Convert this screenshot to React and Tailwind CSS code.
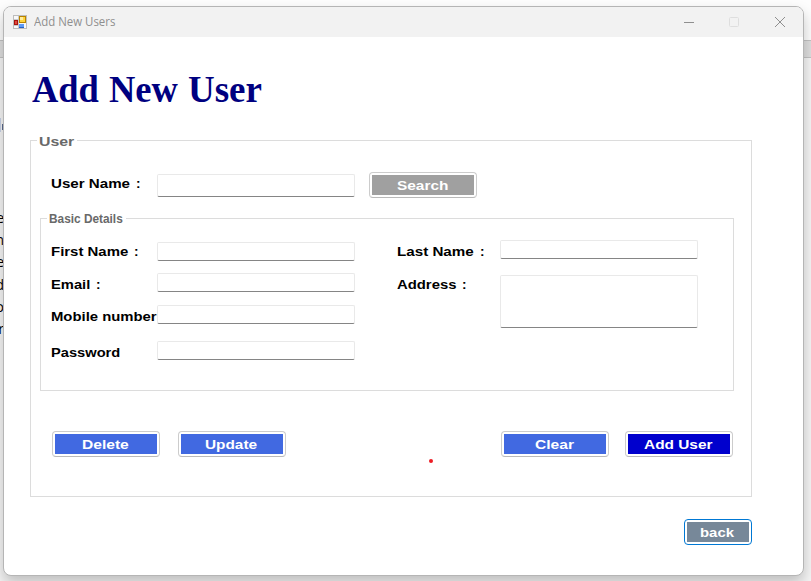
import { useLayoutEffect, useRef, useState } from "react";

// Single line of text stretched horizontally to a given width.
function Wide({ children, width, className = "" }) {
  const ref = useRef(null);
  const [scale, setScale] = useState(1);
  useLayoutEffect(() => {
    setScale(width / ref.current.offsetWidth);
  }, [width]);
  return (
    <span className={`block whitespace-nowrap text-left ${className}`} style={{ width }}>
      <span ref={ref} className="inline-block origin-left" style={{ transform: `scaleX(${scale})` }}>
        {children}
      </span>
    </span>
  );
}

function Label({ children, width, colon }) {
  return (
    <div className="flex h-4 items-center text-[13.6px] leading-4 text-black">
      <Wide width={width} className="font-bold">{children}</Wide>
      {colon && <span className="ml-[6px] font-bold">:</span>}
    </div>
  );
}

function Field({ className = "h-[19px]" }) {
  return (
    <div className={`w-[198px] shrink-0 rounded-[2px] border border-[#e9e9e9] border-b-[#858585] bg-white ${className}`} />
  );
}

function Button({ children, fill, textWidth, className = "w-[108px]", border = "border-[#cccccc] border-b-[#bababa]" }) {
  return (
    <button className={`flex h-[26px] shrink-0 rounded-[4px] border bg-white p-[2px] ${border} ${className}`}>
      <span className={`flex h-5 w-full justify-center pr-[2px] pt-px text-[13.6px] font-bold leading-5 text-white ${fill}`}>
        <Wide width={textWidth}>{children}</Wide>
      </span>
    </button>
  );
}

function AppIcon() {
  return (
    <svg width="14" height="14" viewBox="0 0 14 14" shapeRendering="crispEdges">
      <rect x=".5" y=".5" width="13" height="13" fill="#f8f8f8" stroke="#bdbdbd" />
      <path d="M5.5 1v12M1 4.5h4M1 10.5h4" stroke="#c9c9c9" />
      <rect x="1" y="5" width="4" height="5" fill="#e0483c" />
      <rect x="1.5" y="5.5" width="3" height="4" fill="none" stroke="#a8140e" />
      <rect x="6.5" y="1.5" width="6" height="6" fill="#ffd43e" stroke="#b88300" />
      <rect x="7" y="2" width="3" height="3" fill="#ffed9d" />
      <rect x="6" y="9" width="5" height="4" fill="#5e9bf5" />
      <path d="M6 12.5h5" stroke="#2861c5" />
    </svg>
  );
}

export default function App() {
  return (
    <div className="relative h-[581px] w-[811px] overflow-hidden bg-[#fbfbfb] font-['Liberation_Sans',Arial,sans-serif]">
      <div className="flex h-full flex-col">
        <div className="h-10 bg-[#fdfdfd]" />
        <div className="h-[18px] border-y border-[#c2c2c2] bg-[#dedede]" />
        <div className="flex flex-1 flex-col bg-[#f5f5f5] pt-[60px] text-[14px] leading-[22.2px] text-black">
          <div className="flex h-[14px] w-[3px] items-center justify-between">
            <span className="h-full w-px bg-[#c8d2e6]" />
            <span className="mt-[4px] h-[6px] w-px bg-[#5a6a90]" />
          </div>
          <div className="flex w-1 flex-col items-end overflow-hidden pt-[75px] font-['Open_Sans',sans-serif]">
            <span>e</span>
            <span>n</span>
            <span>e</span>
            <span>d</span>
            <span>o</span>
            <span>r</span>
          </div>
        </div>
      </div>

      <main className="absolute left-[3px] top-[6px] flex h-[570px] w-[801px] flex-col overflow-hidden rounded-[8px] border border-[#b5b5b5] bg-white shadow-[0_7px_14px_rgba(0,0,0,0.22)]">
        <header className="flex h-[30px] shrink-0 items-center bg-[#f2f2f2] pl-[9px] text-[#8f8f8f]">
          <AppIcon />
          <Wide width={81} className="ml-[7px] font-['Open_Sans',sans-serif] text-[12px] leading-4">Add New Users</Wide>
          <svg className="ml-auto mr-[17px]" width="102" height="12" viewBox="0 0 102 12" fill="none">
            <path d="M0 6.5h10" stroke="#8f8f8f" />
            <rect x="45.5" y="1.5" width="9" height="9" rx="1" stroke="#dedede" />
            <path d="M91 1l10 10M101 1L91 11" stroke="#8f8f8f" />
          </svg>
        </header>

        <h1 className="ml-[28px] mt-[31px] flex h-[44px] font-['Liberation_Serif',serif] text-[37px] font-bold leading-[44px] text-[#000080]">
          <Wide width={67}>Add</Wide>
          <Wide width={69} className="ml-[10px]">New</Wide>
          <Wide width={74} className="ml-[10px]">User</Wide>
        </h1>

        <section className="ml-[26px] mt-[28px] h-[357px] w-[722px] shrink-0 border border-[#dcdcdc]">
          <div className="-mt-[7px] ml-[6px] h-4 w-[40px] bg-white pl-[2px] text-[13.6px] font-bold leading-4 text-[#696969]">
            <Wide width={35}>User</Wide>
          </div>
          <div className="flex h-[26px] pl-[20px] mt-[22px]">
            <div className="w-[106px] pt-[4px]"><Label width={79} colon>User Name</Label></div>
            <div className="pt-[2px]"><Field className="h-[23px]" /></div>
            <div className="ml-[14px]"><Button fill="bg-[#a0a0a0]" textWidth={51}>Search</Button></div>
          </div>

          <section className="ml-[9px] mt-[20px] h-[173px] w-[694px] border border-[#dcdcdc]">
            <div className="-mt-[7px] ml-[6px] h-[14px] w-[79px] bg-white pl-[2px] text-[12px] font-bold leading-[14px] text-[#696969]">
              <Wide width={74}>Basic Details</Wide>
            </div>
            <div className="flex pl-[10px]">
              <div className="flex w-[106px] flex-col pt-[18px]">
                <Label width={77} colon>First Name</Label>
                <div className="mt-[17px]"><Label width={39} colon>Email</Label></div>
                <div className="mt-[16px]"><Label width={106}>Mobile number</Label></div>
                <div className="mt-[20px]"><Label width={69}>Password</Label></div>
              </div>
              <div className="flex flex-col pt-[16px]">
                <Field />
                <Field className="mt-[12px] h-[19px]" />
                <Field className="mt-[13px] h-[19px]" />
                <Field className="mt-[17px] h-[19px]" />
              </div>
              <div className="ml-[42px] flex w-[103px] flex-col gap-[17px] pt-[18px]">
                <Label width={77} colon>Last Name</Label>
                <Label width={59} colon>Address</Label>
              </div>
              <div className="flex flex-col gap-4 pt-[14px]">
                <Field />
                <Field className="h-[53px]" />
              </div>
            </div>
          </section>

          <div className="mt-[40px] flex pl-[21px]">
            <Button fill="bg-[#4169e1]" textWidth={47}>Delete</Button>
            <div className="ml-[18px]"><Button fill="bg-[#4169e1]" textWidth={52}>Update</Button></div>
            <div className="ml-[143px] mt-[28px] size-1 rounded-full bg-[#ed1c24]" />
            <div className="ml-[68px]"><Button fill="bg-[#4169e1]" textWidth={39}>Clear</Button></div>
            <div className="ml-[16px]"><Button fill="bg-[#0000cd]" textWidth={68}>Add User</Button></div>
          </div>
        </section>

        <div className="ml-[680px] mt-[22px]">
          <Button fill="bg-[#778899]" textWidth={34} className="w-[68px]" border="border-[#0078d4]">back</Button>
        </div>
      </main>
    </div>
  );
}
